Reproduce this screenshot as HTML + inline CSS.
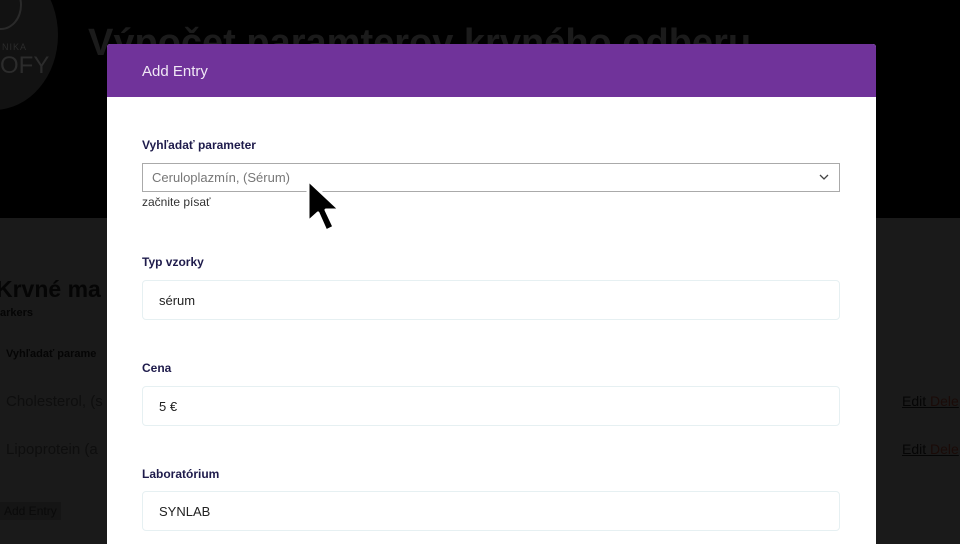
<!DOCTYPE html>
<html><head><meta charset="utf-8"><style>
*{margin:0;padding:0;box-sizing:border-box}
body{width:960px;height:539px;overflow:hidden;position:relative;background:#1a1a1a;font-family:"Liberation Sans",sans-serif}
.top{position:absolute;left:0;top:0;width:960px;height:218px;background:#000}
.bgtitle{position:absolute;left:88px;top:22px;font-size:38px;font-weight:bold;color:#1b1b1b;white-space:nowrap}
.logo{position:absolute;left:-70px;top:-40px;width:128px;height:150px;background:#121212;border-radius:50%}
.ring{position:absolute;left:-20px;top:-20px;width:42px;height:50px;border:2px solid #2a2a2a;border-radius:50%}
.logot{position:absolute;left:2px;top:42px;color:#2c2c2c;font-size:9px;letter-spacing:1px}
.logot2{position:absolute;left:0;top:52px;color:#2c2c2c;font-size:24px}
.b{position:absolute;color:#050505;white-space:nowrap}
.modal{position:absolute;left:107px;top:44px;width:769px;height:500px;background:#fff;border-radius:3px 3px 0 0}
.mh{height:53px;background:#70339a;color:#f0e8f5;font-size:15px;padding:19px 0 0 35px;border-radius:3px 3px 0 0}
.lbl{position:absolute;left:35px;font-size:12px;font-weight:bold;color:#1e1b4b}
.inp{position:absolute;left:35px;width:698px;height:40px;border:1px solid #e6f0f2;border-radius:4px;font-size:13px;color:#222;padding:12px 0 0 16px}
.sel{position:absolute;left:35px;top:119px;width:698px;height:29px;border:1px solid #aaa;font-size:13px;color:#777;padding:6px 0 0 9px}
</style></head><body>
<div class="top">
<div class="logo"></div><div class="ring"></div>
<div class="logot">NIKA</div><div class="logot2">OFY</div>
<div class="bgtitle">Výpočet paramterov krvného odberu</div>
</div>
<div class="b" style="left:-4px;top:276px;font-size:23px;font-weight:bold">Krvné ma</div>
<div class="b" style="left:0;top:307px;font-size:11px;font-weight:bold">arkers</div>
<div class="b" style="left:6px;top:348px;font-size:11px;font-weight:bold">Vyhľadať parame</div>
<div class="b" style="left:6px;top:393px;font-size:15px;color:#0e0e0e">Cholesterol, (s</div>
<div class="b" style="left:6px;top:441px;font-size:15px;color:#0e0e0e">Lipoprotein (a</div>
<div class="b" style="left:0;top:502px;font-size:12px;color:#0a0a0a;background:#151515;padding:2px 4px">Add Entry</div>
<div class="b" style="left:902px;top:393px;font-size:14px;text-decoration:underline">Edit <span style="color:#1a0b08">Dele</span></div>
<div class="b" style="left:902px;top:441px;font-size:14px;text-decoration:underline">Edit <span style="color:#1a0b08">Dele</span></div>
<div class="modal">
<div class="mh">Add Entry</div>
<div class="lbl" style="top:94px">Vyhľadať parameter</div>
<div class="sel">Ceruloplazmín, (Sérum)
<svg style="position:absolute;right:10px;top:10px" width="10" height="6" viewBox="0 0 10 6"><path d="M1 1l4 4 4-4" stroke="#444" stroke-width="1.3" fill="none"/></svg></div>
<div style="position:absolute;left:35px;top:151px;font-size:12px;color:#333">začnite písať</div>
<div class="lbl" style="top:211px">Typ vzorky</div>
<div class="inp" style="top:236px">sérum</div>
<div class="lbl" style="top:317px">Cena</div>
<div class="inp" style="top:342px">5 €</div>
<div class="lbl" style="top:423px">Laboratórium</div>
<div class="inp" style="top:447px">SYNLAB</div>
</div>
<svg style="position:absolute;left:303px;top:176px" width="42" height="62" viewBox="0 0 42 62"><path d="M5 4 L5 46 L15 37 L23 55 L31 51 L23 34 L37 34 Z" fill="#000" stroke="#fff" stroke-width="3" stroke-linejoin="round"/></svg>
</body></html>
